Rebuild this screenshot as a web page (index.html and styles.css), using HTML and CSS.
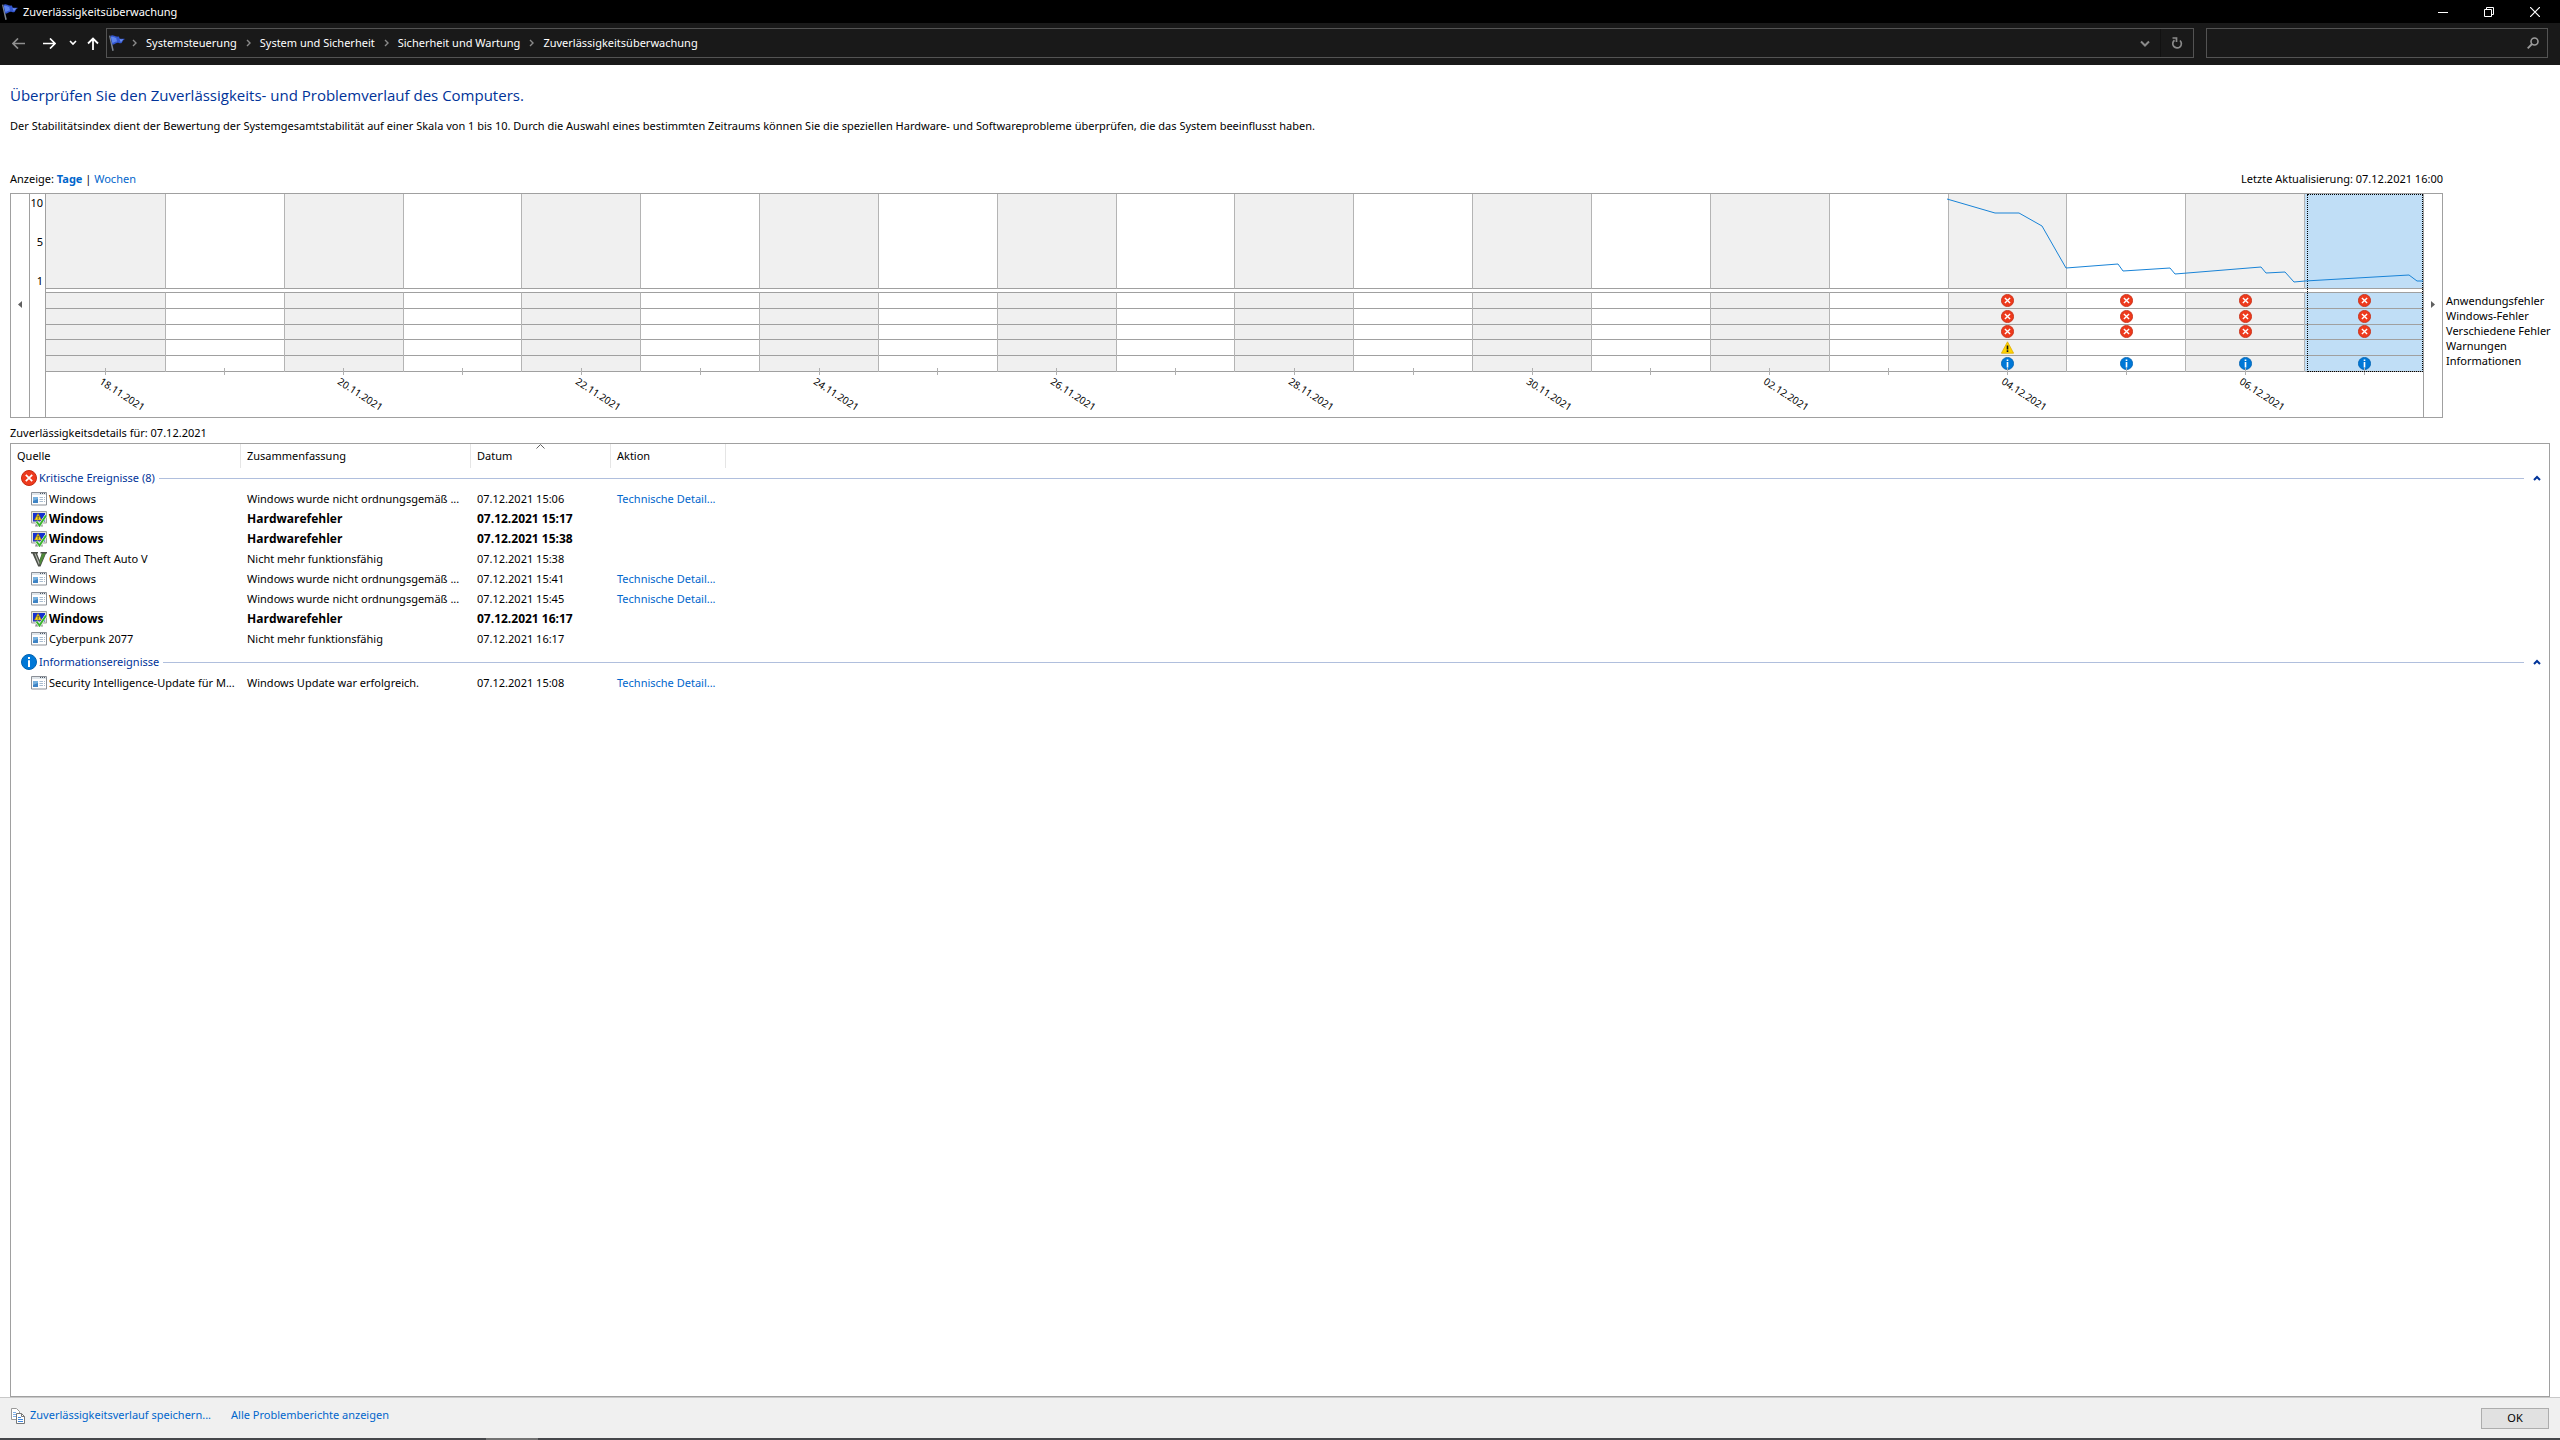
FILE: index.html
```html
<!DOCTYPE html>
<html lang="de">
<head>
<meta charset="utf-8">
<title>Zuverlässigkeitsüberwachung</title>
<link rel="stylesheet" href="styles.css">
</head>
<body>
<svg class="sprite" aria-hidden="true">
  <symbol id="flag" viewBox="0 0 16 16">
    <path d="M0 .8 1.300.4 4.800 15.600l-1.500.4z" fill="#7d858e"/>
    <path d="M1.400 1C3.500-.6 5.500 1.200 7.500 1.600c1 .2 1.700-.2 2.500.2l.6 1.800c1.800.6 3.600-.2 5.400.4-2 .9-2.500 2.600-3.400 4.100-2 .6-2.800-.6-4.300-.4-1.800.4-2.900 2.100-5.200 1.900z" fill="#3356cf"/>
    <path d="M2 2c2-.9 3.400.6 5.200 1l.8 3.400C6 6.200 4.800 7.800 3.300 7.800z" fill="#5f86ee"/>
    <path d="M10.500 4.100c1.200.5 2.700.2 3.900.2-1.100.8-1.700 1.900-2.500 2.900z" fill="#6f92ee"/>
  </symbol>
  <symbol id="crumb" viewBox="0 0 5 8"><path d="M1 1l3 3-3 3" fill="none" stroke="#8a8a8a" stroke-width="1.400"/></symbol>
  <symbol id="error" viewBox="0 0 16 16">
    <circle cx="8" cy="8" r="7.500" fill="#ee3a1d" stroke="#c42b12"/>
    <path d="M4.800 4.800l6.400 6.400M11.200 4.800l-6.400 6.400" stroke="#fff" stroke-width="1.700"/>
  </symbol>
  <symbol id="info" viewBox="0 0 16 16">
    <circle cx="8" cy="8" r="7.500" fill="#0078d7" stroke="#0063b1"/>
    <path d="M7 3h2v2H7zM7 6.300h2V13H7z" fill="#fff"/>
  </symbol>
  <symbol id="warning" viewBox="0 0 16 16">
    <path d="M8 1l7.500 14H.5z" fill="#ffd400" stroke="#e0ac00"/>
    <path d="M7 5.500h2v5H7zM7 11.500h2v2H7z" fill="#111"/>
  </symbol>
  <symbol id="app" viewBox="0 0 16 16">
    <path d="M.5 1.500h15v12.500H.5z" fill="#fff" stroke="#8b9097"/>
    <path d="M1 2h14v2H1z" fill="#dfe5ea"/>
    <path d="M9 2.500h1M11 2.500h1M13 2.500h1" stroke="#4d5966"/>
    <path d="M2 6h5v6H2z" fill="#3e83c4"/><path d="M2 6h5v2L2 10z" fill="#75b0de"/>
    <path d="M8.500 6.500H12M8.500 8.500H12M8.500 10.500H12M13 6.500h1M13 8.500h1M13 10.500h1" stroke="#a9bdd0"/>
  </symbol>
  <symbol id="hardware" viewBox="0 0 16 16">
    <path d="M.5.5h15v11.500H.5z" fill="#e3e3dc" stroke="#a4a49e"/>
    <path d="M2 2h12v8.500H2z" fill="#1630cf"/>
    <path d="M5 12.500h6l1 3H4z" fill="#8e938e"/>
    <path d="M7 2.500l3.500 6.500H3.500z" fill="#ffdf20" stroke="#a98000" stroke-width=".6"/>
    <path d="M6.600 4.800h1v2h-1zM6.600 7.300h1v1h-1z" fill="#222"/>
    <path d="M5.500 10.500l3 4L15 4.500" fill="none" stroke="#fff" stroke-width="3"/>
    <path d="M5.500 10.500l3 4L15 4.500" fill="none" stroke="#38b52c" stroke-width="2"/>
  </symbol>
  <symbol id="gta" viewBox="0 0 16 16">
    <path d="M0 1h7v1.500H6L8.600 9l2.200-6.500H9.500V1H16v1.500h-1L9.500 15.500H7.200L1.400 2.500H0z" fill="#4b4f48"/>
    <path d="M3.500 2.500h1L8.500 12 8 14z" fill="#b9beb4"/>
    <path d="M11 2.500h3.500L9.300 14 8.500 10z" fill="#4f8b3a"/>
  </symbol>
  <symbol id="collapse" viewBox="0 0 8 6"><path d="M1 5l3-3 3 3" fill="none" stroke="#003399" stroke-width="2"/></symbol>
</svg>

<header class="titlebar">
  <svg class="icon"><use href="#flag"/></svg>
  <span class="titlebar-text">Zuverlässigkeitsüberwachung</span>
  <button class="window-button" aria-label="Minimieren"><svg width="10" height="10"><path d="M0 5.500h10" stroke="#fff"/></svg></button>
  <button class="window-button" aria-label="Verkleinern"><svg width="10" height="10"><path d="M.5 2.500h7v7h-7zM2.500 2.500v-2h7v7h-2" fill="none" stroke="#fff"/></svg></button>
  <button class="window-button" aria-label="Schließen"><svg width="10" height="10"><path d="M0 0l10 10M10 0L0 10" stroke="#fff" stroke-width="1.200"/></svg></button>
</header>

<nav class="navbar">
  <button class="nav-button back" aria-label="Zurück"><svg width="13" height="11"><path d="M13 5.500H1M6 .5l-5 5 5 5" fill="none" stroke="#8f8f8f" stroke-width="1.700"/></svg></button>
  <button class="nav-button forward" aria-label="Vorwärts"><svg width="13" height="11"><path d="M0 5.500h12M7 .5l5 5-5 5" fill="none" stroke="#fff" stroke-width="1.700"/></svg></button>
  <button class="nav-button recent" aria-label="Zuletzt besucht"><svg width="8" height="6"><path d="M1 1l3 3 3-3" fill="none" stroke="#fff" stroke-width="1.600"/></svg></button>
  <button class="nav-button up" aria-label="Nach oben"><svg width="12" height="13"><path d="M6 13V1.500M1 6.500l5-5 5 5" fill="none" stroke="#fff" stroke-width="1.800"/></svg></button>
  <div class="address">
    <svg class="icon"><use href="#flag"/></svg>
    <svg class="crumb"><use href="#crumb"/></svg><a href="#">Systemsteuerung</a>
    <svg class="crumb"><use href="#crumb"/></svg><a href="#">System und Sicherheit</a>
    <svg class="crumb"><use href="#crumb"/></svg><a href="#">Sicherheit und Wartung</a>
    <svg class="crumb"><use href="#crumb"/></svg><a href="#">Zuverlässigkeitsüberwachung</a>
    <button class="address-button history" aria-label="Verlauf"><svg width="10" height="7"><path d="M1 1.500l4 4 4-4" fill="none" stroke="#8a8a8a" stroke-width="2"/></svg></button>
    <button class="address-button" aria-label="Aktualisieren"><svg width="12" height="12"><path d="M3.500 3.200a4.300 4.300 0 1 0 5.500.3M1.500 1h4v4" fill="none" stroke="#8a8a8a" stroke-width="1.700"/></svg></button>
  </div>
  <div class="search">
    <input type="search" aria-label="Suchen">
    <svg width="12" height="12"><path d="M.7 11.300L5 7" stroke="#9a9a9a" stroke-width="1.800"/><circle cx="7.500" cy="4.500" r="3.500" fill="none" stroke="#9a9a9a" stroke-width="1.600"/></svg>
  </div>
</nav>

<main class="content">
  <h1>Überprüfen Sie den Zuverlässigkeits- und Problemverlauf des Computers.</h1>
  <p class="intro">Der Stabilitätsindex dient der Bewertung der Systemgesamtstabilität auf einer Skala von 1 bis 10. Durch die Auswahl eines bestimmten Zeitraums können Sie die speziellen Hardware- und Softwareprobleme überprüfen, die das System beeinflusst haben.</p>

  <div class="view-row">
    <div>Anzeige: <a href="#" class="current">Tage</a> | <a href="#">Wochen</a></div>
    <div>Letzte Aktualisierung: 07.12.2021 16:00</div>
  </div>

  <div class="chart-row">
    <section class="chart" aria-label="Stabilitätsindex">
      <button class="scroll" aria-label="Früher"><svg width="4" height="7"><path d="M4 0v7L0 3.500z" fill="#606060"/></svg></button>
      <div class="axis"><span>10</span><span>5</span><span>1</span></div>
      <div class="plot">
        <div class="day"><div class="score"></div><div class="events"><i></i><i></i><i></i><i></i><i></i></div><time>18.11.2021</time></div>
        <div class="day"><div class="score"></div><div class="events"><i></i><i></i><i></i><i></i><i></i></div></div>
        <div class="day"><div class="score"></div><div class="events"><i></i><i></i><i></i><i></i><i></i></div><time>20.11.2021</time></div>
        <div class="day"><div class="score"></div><div class="events"><i></i><i></i><i></i><i></i><i></i></div></div>
        <div class="day"><div class="score"></div><div class="events"><i></i><i></i><i></i><i></i><i></i></div><time>22.11.2021</time></div>
        <div class="day"><div class="score"></div><div class="events"><i></i><i></i><i></i><i></i><i></i></div></div>
        <div class="day"><div class="score"></div><div class="events"><i></i><i></i><i></i><i></i><i></i></div><time>24.11.2021</time></div>
        <div class="day"><div class="score"></div><div class="events"><i></i><i></i><i></i><i></i><i></i></div></div>
        <div class="day"><div class="score"></div><div class="events"><i></i><i></i><i></i><i></i><i></i></div><time>26.11.2021</time></div>
        <div class="day"><div class="score"></div><div class="events"><i></i><i></i><i></i><i></i><i></i></div></div>
        <div class="day"><div class="score"></div><div class="events"><i></i><i></i><i></i><i></i><i></i></div><time>28.11.2021</time></div>
        <div class="day"><div class="score"></div><div class="events"><i></i><i></i><i></i><i></i><i></i></div></div>
        <div class="day"><div class="score"></div><div class="events"><i></i><i></i><i></i><i></i><i></i></div><time>30.11.2021</time></div>
        <div class="day"><div class="score"></div><div class="events"><i></i><i></i><i></i><i></i><i></i></div></div>
        <div class="day"><div class="score"></div><div class="events"><i></i><i></i><i></i><i></i><i></i></div><time>02.12.2021</time></div>
        <div class="day"><div class="score"></div><div class="events"><i></i><i></i><i></i><i></i><i></i></div></div>
        <div class="day"><div class="score"></div><div class="events"><i><svg><use href="#error"/></svg></i><i><svg><use href="#error"/></svg></i><i><svg><use href="#error"/></svg></i><i><svg><use href="#warning"/></svg></i><i><svg><use href="#info"/></svg></i></div><time>04.12.2021</time></div>
        <div class="day"><div class="score"></div><div class="events"><i><svg><use href="#error"/></svg></i><i><svg><use href="#error"/></svg></i><i><svg><use href="#error"/></svg></i><i></i><i><svg><use href="#info"/></svg></i></div></div>
        <div class="day"><div class="score"></div><div class="events"><i><svg><use href="#error"/></svg></i><i><svg><use href="#error"/></svg></i><i><svg><use href="#error"/></svg></i><i></i><i><svg><use href="#info"/></svg></i></div><time>06.12.2021</time></div>
        <div class="day selected"><div class="score"></div><div class="events"><i><svg><use href="#error"/></svg></i><i><svg><use href="#error"/></svg></i><i><svg><use href="#error"/></svg></i><i></i><i><svg><use href="#info"/></svg></i></div></div>
        <svg class="trend" viewBox="0 0 2377 94" preserveAspectRatio="none"><polyline points="1901,5 1949,19 1973,19 1996,32 2020,74 2072,70 2077,77 2124,74 2129,80 2215,73 2220,79 2239,78 2248,88 2259,87 2363,81 2371,87 2377,87"/></svg>
      </div>
      <button class="scroll" aria-label="Später"><svg width="4" height="7"><path d="M0 0v7l4-3.500z" fill="#606060"/></svg></button>
    </section>
    <ul class="legend"><li>Anwendungsfehler</li><li>Windows-Fehler</li><li>Verschiedene Fehler</li><li>Warnungen</li><li>Informationen</li></ul>
  </div>

  <h2>Zuverlässigkeitsdetails für: 07.12.2021</h2>

  <div class="details">
    <table>
      <colgroup><col class="col-wide"><col class="col-wide"><col class="col-date"><col class="col-action"><col></colgroup>
      <thead>
        <tr><th>Quelle</th><th>Zusammenfassung</th><th class="sorted">Datum<svg class="sort" width="9" height="5"><path d="M.5 4.500l4-4 4 4" fill="none" stroke="#606060"/></svg></th><th>Aktion</th><th></th></tr>
      </thead>
      <tbody>
        <tr class="group"><th colspan="5"><div class="group-head"><svg class="icon"><use href="#error"/></svg><span>Kritische Ereignisse (8)</span><button aria-label="Kritische Ereignisse reduzieren"><svg width="8" height="6"><use href="#collapse"/></svg></button></div></th></tr>
        <tr><td><div class="source"><svg class="icon"><use href="#app"/></svg>Windows</div></td><td>Windows wurde nicht ordnungsgemäß ...</td><td>07.12.2021 15:06</td><td><a href="#">Technische Detail...</a></td><td></td></tr>
        <tr class="unread"><td><div class="source"><svg class="icon"><use href="#hardware"/></svg>Windows</div></td><td>Hardwarefehler</td><td>07.12.2021 15:17</td><td></td><td></td></tr>
        <tr class="unread"><td><div class="source"><svg class="icon"><use href="#hardware"/></svg>Windows</div></td><td>Hardwarefehler</td><td>07.12.2021 15:38</td><td></td><td></td></tr>
        <tr><td><div class="source"><svg class="icon"><use href="#gta"/></svg>Grand Theft Auto V</div></td><td>Nicht mehr funktionsfähig</td><td>07.12.2021 15:38</td><td></td><td></td></tr>
        <tr><td><div class="source"><svg class="icon"><use href="#app"/></svg>Windows</div></td><td>Windows wurde nicht ordnungsgemäß ...</td><td>07.12.2021 15:41</td><td><a href="#">Technische Detail...</a></td><td></td></tr>
        <tr><td><div class="source"><svg class="icon"><use href="#app"/></svg>Windows</div></td><td>Windows wurde nicht ordnungsgemäß ...</td><td>07.12.2021 15:45</td><td><a href="#">Technische Detail...</a></td><td></td></tr>
        <tr class="unread"><td><div class="source"><svg class="icon"><use href="#hardware"/></svg>Windows</div></td><td>Hardwarefehler</td><td>07.12.2021 16:17</td><td></td><td></td></tr>
        <tr><td><div class="source"><svg class="icon"><use href="#app"/></svg>Cyberpunk 2077</div></td><td>Nicht mehr funktionsfähig</td><td>07.12.2021 16:17</td><td></td><td></td></tr>
      </tbody>
      <tbody>
        <tr class="group"><th colspan="5"><div class="group-head later"><svg class="icon"><use href="#info"/></svg><span>Informationsereignisse</span><button aria-label="Informationsereignisse reduzieren"><svg width="8" height="6"><use href="#collapse"/></svg></button></div></th></tr>
        <tr><td><div class="source"><svg class="icon"><use href="#app"/></svg>Security Intelligence-Update für M...</div></td><td>Windows Update war erfolgreich.</td><td>07.12.2021 15:08</td><td><a href="#">Technische Detail...</a></td><td></td></tr>
      </tbody>
    </table>
  </div>
</main>

<footer class="footer">
  <svg class="icon" viewBox="0 0 16 16"><path d="M1.500.5h5l3 3v8h-8z" fill="#fff" stroke="#999"/><path d="M3 4.500h3M3 6.500h3M3 8.500h3" stroke="#7fb0ea"/><path d="M6.500 5.500h5l3 3v7h-8z" fill="#fff" stroke="#777"/><path d="M11.500 5.500v3h3" fill="none" stroke="#777"/><path d="M8 9.500h3M8 11.500h5M8 13.500h5" stroke="#3f87dd"/></svg>
  <a href="#" class="save">Zuverlässigkeitsverlauf speichern...</a>
  <a href="#">Alle Problemberichte anzeigen</a>
  <button class="ok">OK</button>
</footer>
<div class="taskbar"></div>
</body>
</html>
```
FILE: styles.css
```css
* { box-sizing: border-box; }

body {
  margin: 0;
  min-height: 100vh;
  display: flex;
  flex-direction: column;
  background: #fff;
  color: #000;
  font: 11px/16px "Noto Sans", "Open Sans", sans-serif;
}

button {
  margin: 0;
  padding: 0;
  border: 0;
  background: none;
  color: inherit;
  font: inherit;
}

svg { display: block; flex: none; }
a { color: #0066cc; text-decoration: none; }
.sprite { position: absolute; width: 0; height: 0; }
.icon { width: 16px; height: 16px; }

/* Window frame */
.titlebar {
  display: flex;
  align-items: center;
  height: 23px;
  padding: 0 2px;
  background: #000;
  color: #fff;
}
.titlebar-text { flex: 1; padding-left: 5px; }
.window-button {
  display: grid;
  place-items: center;
  width: 46px;
  height: 20px;
}

.navbar {
  display: flex;
  height: 42px;
  padding: 5px 12px 7px 4px;
  background: #191919;
  color: #fff;
}
.nav-button { display: grid; place-items: center; }
.back { width: 28px; }
.forward { width: 34px; }
.recent { width: 14px; }
.up { width: 26px; }
.address {
  display: flex;
  flex: 1;
  align-items: center;
  padding-left: 2px;
  border: 1px solid #535353;
}
.address a { color: #fff; }
.crumb { width: 5px; height: 8px; margin: 0 9px; }
.address .icon + .crumb { margin-left: 7px; }
.address-button {
  display: grid;
  place-items: center;
  align-self: stretch;
  width: 32px;
}
.history { margin-left: auto; border-right: 1px solid #111; }
.search {
  display: flex;
  align-items: center;
  width: 342px;
  margin-left: 12px;
  padding-right: 8px;
  border: 1px solid #535353;
}
.search input {
  flex: 1;
  align-self: stretch;
  border: 0;
  outline: 0;
  background: none;
  color: #fff;
  font: inherit;
}

/* Page body */
.content {
  display: flex;
  flex: 1;
  flex-direction: column;
  padding: 19px 10px 0;
}
h1 {
  margin: 0;
  color: #003399;
  font-family: "Open Sans", "Noto Sans", sans-serif;
  font-size: 15px;
  font-weight: 400;
  line-height: 22px;
}
.intro { margin: 12px 0 37px; }
.view-row {
  display: flex;
  justify-content: space-between;
  margin: 0 107px 6px 0;
}
.current { font-weight: 700; }

/* Stability chart */
.chart-row { display: flex; margin-right: -10px; }
.chart {
  display: grid;
  flex: 1;
  grid-template-columns: 18px 17px 1fr 18px;
  min-height: 225px;
  border: 1px solid #a0a0a0;
}
.scroll { display: grid; place-items: center; padding-bottom: 2px; }
.axis {
  display: flex;
  flex-direction: column;
  gap: 23px;
  padding: 1px 2px 0 0;
  border: solid #a0a0a0;
  border-width: 0 1px;
  text-align: right;
}
.plot {
  position: relative;
  display: grid;
  grid-template-columns: repeat(20, minmax(0, 1fr));
  border-right: 1px solid #a0a0a0;
}
.day { position: relative; }
.score {
  height: 95px;
  margin-bottom: 3px;
  border-bottom: 1px solid #a0a0a0;
}
.events {
  display: grid;
  grid-template-rows: repeat(5, 1fr);
  height: 80px;
  border-top: 1px solid #a0a0a0;
}
.events i {
  display: grid;
  place-items: center;
  border-bottom: 1px solid #a0a0a0;
}
.events svg { width: 13px; height: 13px; }
.day + .day .score,
.day + .day .events { border-left: 1px solid #b4b4b4; }
.day:nth-child(odd) .score,
.day:nth-child(odd) .events { background: #f0f0f0; }
.day.selected .score,
.day.selected .events { background: #c0def6; }
.day::before {
  content: "";
  position: absolute;
  top: 174px;
  left: 50%;
  width: 1px;
  height: 7px;
  background: #b0b0b0;
}
.day.selected::after {
  content: "";
  position: absolute;
  top: 0;
  right: 0;
  left: 3px;
  height: 176px;
  border: 1px dotted #000;
}
.day time {
  display: block;
  width: 56px;
  margin: 2px 0 0 calc(50% - 4px);
  transform: rotate(33deg);
  transform-origin: 0 50%;
  font-size: 10px;
  line-height: 12px;
}
.trend {
  position: absolute;
  top: 0;
  left: 0;
  width: 100%;
  height: 94px;
}
.trend polyline {
  fill: none;
  stroke: #1883d7;
  stroke-width: 1;
  vector-effect: non-scaling-stroke;
}
.legend {
  width: 117px;
  margin: 0;
  padding: 100px 0 0 3px;
  list-style: none;
  line-height: 15px;
  white-space: nowrap;
}

/* Event list */
h2 {
  margin: 7px 0 2px;
  font-size: 11px;
  font-weight: 400;
}
.details {
  flex: 1;
  border: 1px solid #a0a0a0;
}
table {
  width: 100%;
  border-spacing: 0;
  table-layout: fixed;
}
.col-wide { width: 230px; }
.col-date { width: 140px; }
.col-action { width: 115px; }
th, td {
  height: 20px;
  padding: 0 0 0 6px;
  overflow: hidden;
  font-weight: 400;
  text-align: left;
  white-space: nowrap;
}
thead th { height: 24px; border-right: 1px solid #e5e5e5; }
thead th:last-child { border-right: 0; }
.sorted { position: relative; }
.sort { position: absolute; top: 0; left: 65px; }
.source {
  display: flex;
  align-items: center;
  gap: 2px;
  padding-left: 14px;
}
.unread td {
  font-family: "Open Sans", "Noto Sans", sans-serif;
  font-size: 12px;
  font-weight: 700;
}
.group-head {
  display: flex;
  align-items: center;
  gap: 2px;
  height: 20px;
  margin-bottom: 1px;
  padding: 0 8px 0 4px;
  color: #003399;
}
.later { margin-top: 3px; }
.group-head::after {
  content: "";
  order: 1;
  flex: 1;
  height: 1px;
  margin: 0 7px 0 2px;
  background: #b0bfdd;
}
.group-head button { order: 2; }

/* Bottom bar */
.footer {
  display: flex;
  align-items: center;
  height: 41px;
  padding: 0 11px 0 10px;
  border-top: 1px solid #c8c8c8;
  background: #f0f0f0;
}
.footer .icon { margin-bottom: 4px; }
.save { margin: 0 20px 0 4px; }
.footer a { padding-bottom: 6px; }
.ok {
  width: 68px;
  height: 21px;
  margin-left: auto;
  border: 1px solid #adadad;
  background: #e1e1e1;
}
.taskbar {
  height: 2px;
  background: linear-gradient(90deg, #46474b 19%, #737373 19%, #737373 21%, #46474b 21%);
}
```
